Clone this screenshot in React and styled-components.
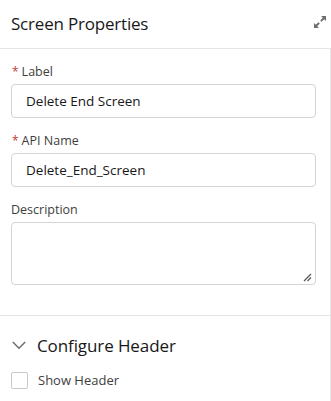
import React from "react";
import styled, { createGlobalStyle } from "styled-components";

const Global = createGlobalStyle`
  html, body { margin: 0; padding: 0; background: #fff; }
  body { font-family: "Open Sans", "Noto Sans", sans-serif; color: #3e3e3c; }
  * { box-sizing: border-box; }
`;

const Panel = styled.div`
  width: 331px;
  height: 401px;
  display: flex;
  flex-direction: column;
  background: #fff;
  overflow: hidden;
`;

const Header = styled.div`
  height: 49px;
  display: flex;
  align-items: center;
  justify-content: space-between;
  padding: 0 4px 0 11px;
  border-bottom: 1px solid #e5e5e5;
`;

const Title = styled.h2`
  margin: 0 0 1px 0;
  font-size: 17px;
  font-weight: 400;
  color: #181818;
  letter-spacing: -0.2px;
`;

const ExpandIcon = styled.svg`
  margin-bottom: 5px;
`;

const Body = styled.div`
  flex: 1;
  border-right: 1px solid #e5e5e5;
  width: 331px;
  display: flex;
  flex-direction: column;
`;

const Form = styled.div`
  padding: 14px 14px 30px 11px;
  display: flex;
  flex-direction: column;
  gap: 14px;
  border-bottom: 1px solid #e5e5e5;
`;

const Field = styled.div`
  display: flex;
  flex-direction: column;
`;

const FieldLabel = styled.label`
  font-size: 12.5px;
  color: #3e3e3c;
  line-height: 18px;
  margin-bottom: 3px;
  display: flex;
  align-items: center;
`;

const Req = styled.span`
  color: #c23934;
  margin: 0 3px 0 1px;
  font-size: 12px;
`;

const Input = styled.div`
  height: 34px;
  border: 1px solid #d4d4d4;
  border-radius: 4px;
  padding: 0 14px;
  display: flex;
  align-items: center;
  font-size: 13.5px;
  color: #181818;
`;

const TextArea = styled.div`
  position: relative;
  height: 63px;
  border: 1px solid #d4d4d4;
  border-radius: 4px;
`;

const Grip = styled.svg`
  position: absolute;
  right: 3px;
  bottom: 2px;
`;

const Section = styled.div`
  padding: 17px 11px 0 12px;
  display: flex;
  flex-direction: column;
  gap: 14px;
`;

const SectionHead = styled.div`
  display: flex;
  align-items: center;
  gap: 11px;
  font-size: 17px;
  letter-spacing: -0.1px;
  color: #181818;
  height: 24px;
`;

const CheckRow = styled.div`
  display: flex;
  align-items: center;
  gap: 10px;
  font-size: 13px;
  color: #3e3e3c;
  margin-left: -1px;
`;

const Box = styled.span`
  width: 17px;
  height: 17px;
  border: 1px solid #c9c9c9;
  border-radius: 2px;
  background: #fff;
`;

export default function App() {
  return (
    <>
      <Global />
      <Panel>
        <Header>
          <Title>Screen Properties</Title>
          <ExpandIcon width="14" height="14" viewBox="0 0 14 14">
            <path d="M8 1h5v5l-1.8-1.8-2.6 2.6-1.4-1.4 2.6-2.6z" fill="#706e6b" />
            <path d="M6 13h-5v-5l1.8 1.8 2.6-2.6 1.4 1.4-2.6 2.6z" fill="#706e6b" />
          </ExpandIcon>
        </Header>
        <Body>
          <Form>
            <Field>
              <FieldLabel><Req>*</Req>Label</FieldLabel>
              <Input>Delete End Screen</Input>
            </Field>
            <Field>
              <FieldLabel><Req>*</Req>API Name</FieldLabel>
              <Input>Delete_End_Screen</Input>
            </Field>
            <Field>
              <FieldLabel>Description</FieldLabel>
              <TextArea>
                <Grip width="10" height="10" viewBox="0 0 10 10">
                  <path d="M2 9L9 2M5.5 9L9 5.5" stroke="#555" strokeWidth="1.2" />
                </Grip>
              </TextArea>
            </Field>
          </Form>
          <Section>
            <SectionHead>
              <svg width="14" height="14" viewBox="0 0 14 14">
                <path d="M0.8 4L7 10.2 13.2 4" fill="none" stroke="#706e6b" strokeWidth="1.5" />
              </svg>
              Configure Header
            </SectionHead>
            <CheckRow>
              <Box />
              Show Header
            </CheckRow>
          </Section>
        </Body>
      </Panel>
    </>
  );
}
